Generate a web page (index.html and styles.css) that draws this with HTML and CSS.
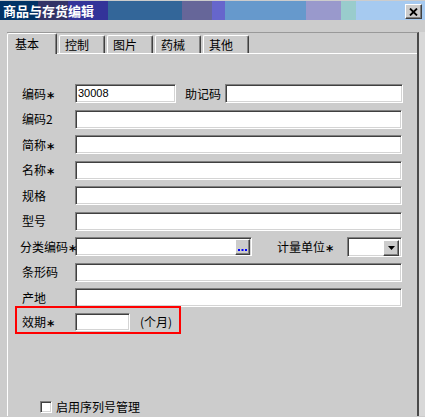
FILE: index.html
```html
<!DOCTYPE html>
<html lang="zh-CN">
  <head>
    <meta charset="utf-8" />
    <title>商品与存货编辑</title>
    <link rel="stylesheet" href="styles.css">
  </head>
  <body>
    <div class="window">
      <div class="titlebar">
        <span class="title">商品与存货编辑</span>
        <button class="close" aria-label="关闭">
          <svg width="9" height="8" viewBox="0 0 9 8">
            <path d="M1 0.5 L8 7.5 M8 0.5 L1 7.5" stroke="#000" stroke-width="1.8" />
          </svg>
        </button>
      </div>

      <div class="frame">
        <div class="tabs">
          <div class="tab active">基本</div>
          <div class="tab">控制</div>
          <div class="tab">图片</div>
          <div class="tab">药械</div>
          <div class="tab">其他</div>
        </div>

        <div class="panel">
          <div class="row">
            <span class="lbl">编码<i class="req">*</i></span>
            <div class="edit code">30008</div>
            <span class="lbl-help">助记码</span>
            <div class="edit memo"></div>
          </div>
          <div class="row">
            <span class="lbl">编码2</span>
            <div class="edit full"></div>
          </div>
          <div class="row">
            <span class="lbl">简称<i class="req">*</i></span>
            <div class="edit full"></div>
          </div>
          <div class="row">
            <span class="lbl">名称<i class="req">*</i></span>
            <div class="edit full"></div>
          </div>
          <div class="row">
            <span class="lbl">规格</span>
            <div class="edit full"></div>
          </div>
          <div class="row">
            <span class="lbl">型号</span>
            <div class="edit full"></div>
          </div>
          <div class="row">
            <span class="lbl wide">分类编码<i class="req">*</i></span>
            <div class="edit category">
              <span class="btn dots">
                <svg width="9" height="2" viewBox="0 0 9 2">
                  <rect x="0" y="0" width="2" height="2" fill="#0000ff" />
                  <rect x="3.5" y="0" width="2" height="2" fill="#0000ff" />
                  <rect x="7" y="0" width="2" height="2" fill="#0000ff" />
                </svg>
              </span>
            </div>
            <span class="lbl-unit">计量单位<i class="req">*</i></span>
            <div class="edit combo">
              <span class="btn arrow">
                <svg width="7" height="4" viewBox="0 0 7 4">
                  <path d="M0 0 H7 L3.5 4 Z" fill="#000" />
                </svg>
              </span>
            </div>
          </div>
          <div class="row">
            <span class="lbl">条形码</span>
            <div class="edit full"></div>
          </div>
          <div class="row">
            <span class="lbl">产地</span>
            <div class="edit full"></div>
          </div>
          <div class="row expiry">
            <span class="lbl">效期<i class="req">*</i></span>
            <div class="edit short"></div>
            <span class="unit">(个月)</span>
          </div>

          <label class="check-row">
            <span class="checkbox"></span>
            <span>启用序列号管理</span>
          </label>
        </div>
      </div>
    </div>
  </body>
</html>
```

FILE: styles.css
```css
* {
  box-sizing: border-box;
}
html,
body {
  margin: 0;
  background: #cccccc;
  color: #000;
  font: 12px/1 "Noto Sans CJK SC", "Liberation Sans", sans-serif;
  overflow: hidden;
}
.window {
  width: 425px;
  height: 417px;
  padding-top: 1px;
}

/* title bar */
.titlebar {
  height: 19px;
  display: flex;
  align-items: center;
  justify-content: space-between;
  padding: 0 3px;
  background: linear-gradient(
    to right,
    #003366 0 38px,
    #333366 38px 68px,
    #333399 68px 108px,
    #336699 108px 182px,
    #666699 182px 212px,
    #6666cc 212px 225px,
    #6699cc 225px 306px,
    #9999cc 306px 341px,
    #99cccc 341px 356px,
    #a6caf0 356px
  );
}
.title {
  color: #fff;
  font-weight: bold;
  font-size: 13px;
}
.close {
  width: 17px;
  height: 15px;
  margin-top: 2px;
  padding: 0;
  display: flex;
  align-items: center;
  justify-content: center;
  background: #cccccc;
  border: 1px solid;
  border-color: #fff #404040 #404040 #fff;
  box-shadow: inset -1px -1px #808080;
}

/* tab frame */
.frame {
  margin: 12px 0 0 7px;
  width: 412px;
  height: 384px;
  border-top: 1px solid #999;
  border-right: 2px solid #4a4a4a;
  box-shadow: 6px 0 0 #d8d8d8;
}
.tabs {
  display: flex;
  align-items: flex-end;
  height: 20px;
}
.tab {
  width: 46px;
  height: 18px;
  margin-left: 2px;
  padding: 3px 0 0 5px;
  border: 1px solid;
  border-bottom: 0;
  border-color: #fff #404040 transparent #fff;
  border-radius: 2px 2px 0 0;
  box-shadow: inset -1px 0 #808080;
}
.tab.active {
  position: relative;
  z-index: 1;
  width: 50px;
  height: 21px;
  margin: -1px 0 -1px 0;
  padding: 4px 0 0 7px;
  background: #cccccc;
}
.panel {
  height: calc(100% - 20px);
  padding: 30px 0 0 14px;
  border-top: 1px solid #fff;
  border-left: 1px solid #fff;
}

/* form rows */
.row {
  display: flex;
  align-items: center;
  height: 19px;
}
.row + .row {
  margin-top: 6.5px;
}
.lbl {
  flex: none;
  width: 53px;
  white-space: nowrap;
}
.lbl.wide {
  width: 55px;
  margin-left: -2px;
}
.req {
  font: bold 14px/1 "DejaVu Sans", sans-serif;
  position: relative;
  top: 3px;
  margin-left: 1px;
}
.lbl-help {
  flex: none;
  width: 40px;
  margin-left: 9px;
}
.lbl-unit {
  flex: none;
  width: 70px;
  margin-left: 25px;
}
.edit {
  flex: none;
  height: 19px;
  background: #fff;
  border: 1px solid;
  border-color: #808080 #fff #fff #808080;
  box-shadow: inset 1px 1px #404040, inset -1px -1px #d4d4d4;
}
.edit.full {
  width: 327px;
}
.edit.code {
  width: 101px;
  padding: 3px 0 0 2px;
  font: 11px/1 "Liberation Sans", sans-serif;
}
.edit.memo {
  width: 178px;
}
.edit.category {
  width: 177px;
  display: flex;
  justify-content: flex-end;
  padding: 1px 1px 1px 0;
}
.edit.combo {
  width: 55px;
  height: 20px;
  display: flex;
  justify-content: flex-end;
  padding: 2px;
}
.edit.short {
  width: 55px;
  height: 18px;
}
.btn {
  display: flex;
  justify-content: center;
  background: #cccccc;
  border: 1px solid;
  border-color: #fff #404040 #404040 #fff;
  box-shadow: inset -1px -1px #808080;
}
.btn.dots {
  width: 15px;
  height: 16px;
  align-items: flex-end;
  padding-bottom: 3px;
}
.btn.arrow {
  width: 16px;
  height: 16px;
  align-items: center;
}

/* highlighted expiry row */
.row.expiry {
  width: 162px;
  height: 24px;
  margin-top: 1px;
  margin-left: -5px;
  padding: 5px 0 1px 5px;
  outline: 2px solid #ff0000;
}
.unit {
  margin-left: 10px;
  white-space: nowrap;
}

.check-row {
  display: flex;
  align-items: center;
  gap: 4px;
  margin: 69px 0 0 18px;
}
.checkbox {
  width: 12px;
  height: 12px;
  background: #fff;
  border: 1px solid;
  border-color: #808080 #fff #fff #808080;
  box-shadow: inset 1px 1px #404040, inset -1px -1px #d4d4d4;
}
```
